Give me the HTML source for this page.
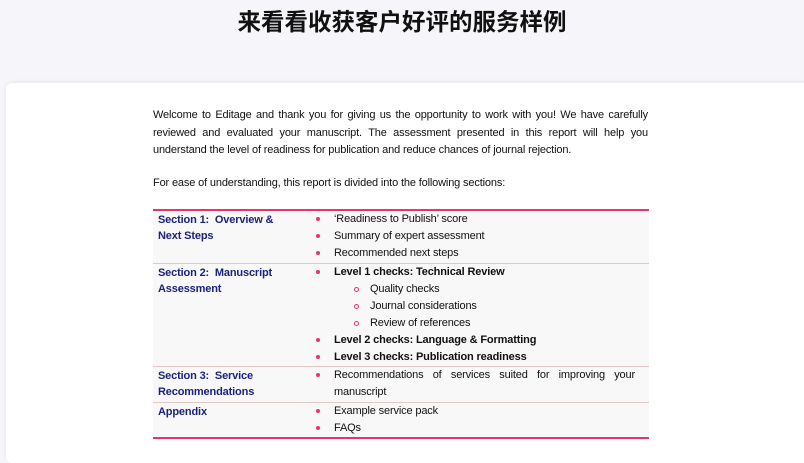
<!DOCTYPE html>
<html><head><meta charset="utf-8"><style>
body{margin:0;width:804px;height:447px;overflow:hidden;background:#f6f6fa;font-family:"Liberation Sans","Noto Sans CJK SC",sans-serif;position:relative}
h1{position:absolute;top:4px;left:0;width:804px;text-align:center;margin:0;font-size:23.5px;font-weight:bold;color:#111;font-family:"Noto Sans CJK SC",sans-serif;line-height:32px}
.card{position:absolute;left:6px;top:83px;width:804px;height:380px;background:#fff;border-radius:6px;box-shadow:0 -1px 4px rgba(0,0,0,.06)}
.p{position:absolute;left:153px;width:495px;font-size:11px;line-height:17.5px;color:#111;text-align:justify;letter-spacing:-0.15px}
table{position:absolute;left:153px;top:209px;width:496px;border-collapse:collapse;background:#f8f8f8;font-size:11px;letter-spacing:-0.15px;table-layout:fixed}
table{border-top:2px solid #e8336b;border-bottom:2px solid #e8336b}
td{vertical-align:top;padding:0;line-height:17px}
tr+tr td{border-top:1px solid #e3c8c8}
td.a{width:155px;padding:1px 0 0 5px;color:#1a237e;font-weight:bold;line-height:16px}
td.b{padding:0 14px 0 0;color:#111}
.l{position:relative;padding-left:21px;line-height:17.2px;text-align:justify}
.l:before{content:"";position:absolute;left:3px;top:6px;width:4px;height:4px;border-radius:50%;background:#e8336b}
.s{position:relative;padding-left:57px;line-height:17px}
.s:before{content:"";position:absolute;left:41px;top:6px;width:3px;height:3px;border-radius:50%;border:1px solid #e8336b}
b{font-weight:bold}
</style></head><body>
<h1>来看看收获客户好评的服务样例</h1>
<div class="card"></div>
<div class="p" style="top:107px">Welcome to Editage and thank you for giving us the opportunity to work with you! We have carefully reviewed and evaluated your manuscript. The assessment presented in this report will help you understand the level of readiness for publication and reduce chances of journal rejection.</div>
<div class="p" style="top:175px">For ease of understanding, this report is divided into the following sections:</div>
<table>
<colgroup><col style="width:160px"><col></colgroup>
<tr><td class="a">Section 1:&nbsp; Overview &amp;<br>Next Steps</td><td class="b"><div class="l">‘Readiness to Publish’ score</div><div class="l">Summary of expert assessment</div><div class="l">Recommended next steps</div></td></tr>
<tr><td class="a">Section 2:&nbsp; Manuscript<br>Assessment</td><td class="b"><div class="l"><b>Level 1 checks: Technical Review</b></div><div class="s">Quality checks</div><div class="s">Journal considerations</div><div class="s">Review of references</div><div class="l"><b>Level 2 checks: Language &amp; Formatting</b></div><div class="l"><b>Level 3 checks: Publication readiness</b></div></td></tr>
<tr><td class="a">Section 3:&nbsp; Service<br>Recommendations</td><td class="b"><div class="l">Recommendations of services suited for improving your manuscript</div></td></tr>
<tr><td class="a">Appendix</td><td class="b"><div class="l">Example service pack</div><div class="l">FAQs</div></td></tr>
</table>
</body></html>
